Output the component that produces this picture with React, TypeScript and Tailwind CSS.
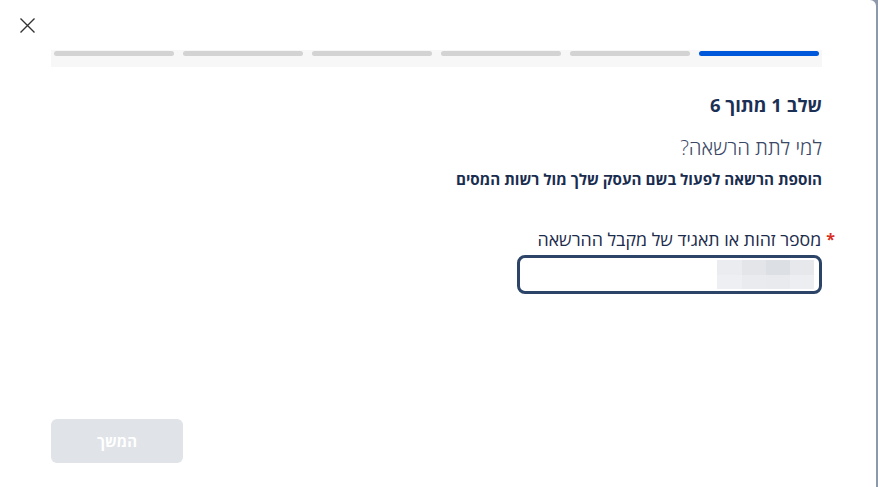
import React from 'react';

const font = { fontFamily: '"Open Sans", "Liberation Sans", "DejaVu Sans", sans-serif' };

const steps = [1, 2, 3, 4, 5, 6];

const StepBar = ({ current }: { current: number }) => (
  <div className="flex gap-[9px] bg-[#f7f7f7] px-[3px] pt-[1px] h-[17px]">
    {steps.map((s) => (
      <div
        key={s}
        className={
          s <= current
            ? 'h-[5px] w-[120px] rounded-full bg-[#0057d9]'
            : 'h-[5px] w-[120px] rounded-full bg-[#d3d3d3]'
        }
      />
    ))}
  </div>
);

export default function App() {
  return (
    <div className="flex h-[487px] w-full bg-[#8d99aa]" style={font}>
      <div className="relative flex-1 bg-white rounded-tr-[6px]">
        <button className="absolute left-[19px] top-[17px] text-[#333]" aria-label="close">
          <svg width="17" height="17" viewBox="0 0 17 17" fill="none" stroke="currentColor" strokeWidth="1.4">
            <path d="M1.5 1.5l14 14M15.5 1.5l-14 14" />
          </svg>
        </button>
        <div dir="rtl" className="flex flex-col items-start pt-[50px] pr-[54px] pl-[51px]">
          <StepBar current={1} />
          <h2 className="mt-[26px] text-[18.5px] leading-[24px] font-bold text-[#1c3056]">שלב 1 מתוך 6</h2>
          <p className="mt-[16px] text-[20.5px] leading-[28px] font-light text-[#3a4866]">למי לתת הרשאה?</p>
          <p className="mt-[8px] text-[15.2px] leading-[20px] font-bold text-[#1a2d4f]">
            הוספת הרשאה לפעול בשם העסק שלך מול רשות המסים
          </p>
          <label className="mt-[39px] flex text-[17.8px] leading-[23px] text-[#1c2c4c]">
            <span className="ml-[5px] mr-[-13px] text-[#d93025] font-bold text-[16px]">*</span>
            <span>מספר זהות או תאגיד של מקבל ההרשאה</span>
          </label>
          <div className="mt-[4px] flex h-[39px] w-[305px] items-stretch rounded-[8px] border-[3px] border-[#2b4468] bg-white p-[2px] pr-[5px]">
            <div className="flex">
              <div className="flex flex-col">
                <div className="h-[16px] w-[24px] bg-[#e6e8ec]" />
                <div className="h-[16px] w-[24px] bg-[#eceef1]" />
              </div>
              <div className="flex flex-col">
                <div className="h-[16px] w-[24px] bg-[#dcdfe4]" />
                <div className="h-[16px] w-[24px] bg-[#e8eaee]" />
              </div>
              <div className="flex flex-col">
                <div className="h-[16px] w-[24px] bg-[#e3e5e9]" />
                <div className="h-[16px] w-[24px] bg-[#e9ebef]" />
              </div>
              <div className="flex flex-col">
                <div className="h-[16px] w-[25px] bg-[#eaecef]" />
                <div className="h-[16px] w-[25px] bg-[#eeeff2]" />
              </div>
            </div>
          </div>
          <button className="mt-[125px] self-end h-[44px] w-[132px] rounded-[6px] bg-[#e0e3e8] text-[15px] font-bold text-white">
            המשך
          </button>
        </div>
      </div>
      <div className="w-[2px]" />
    </div>
  );
}
